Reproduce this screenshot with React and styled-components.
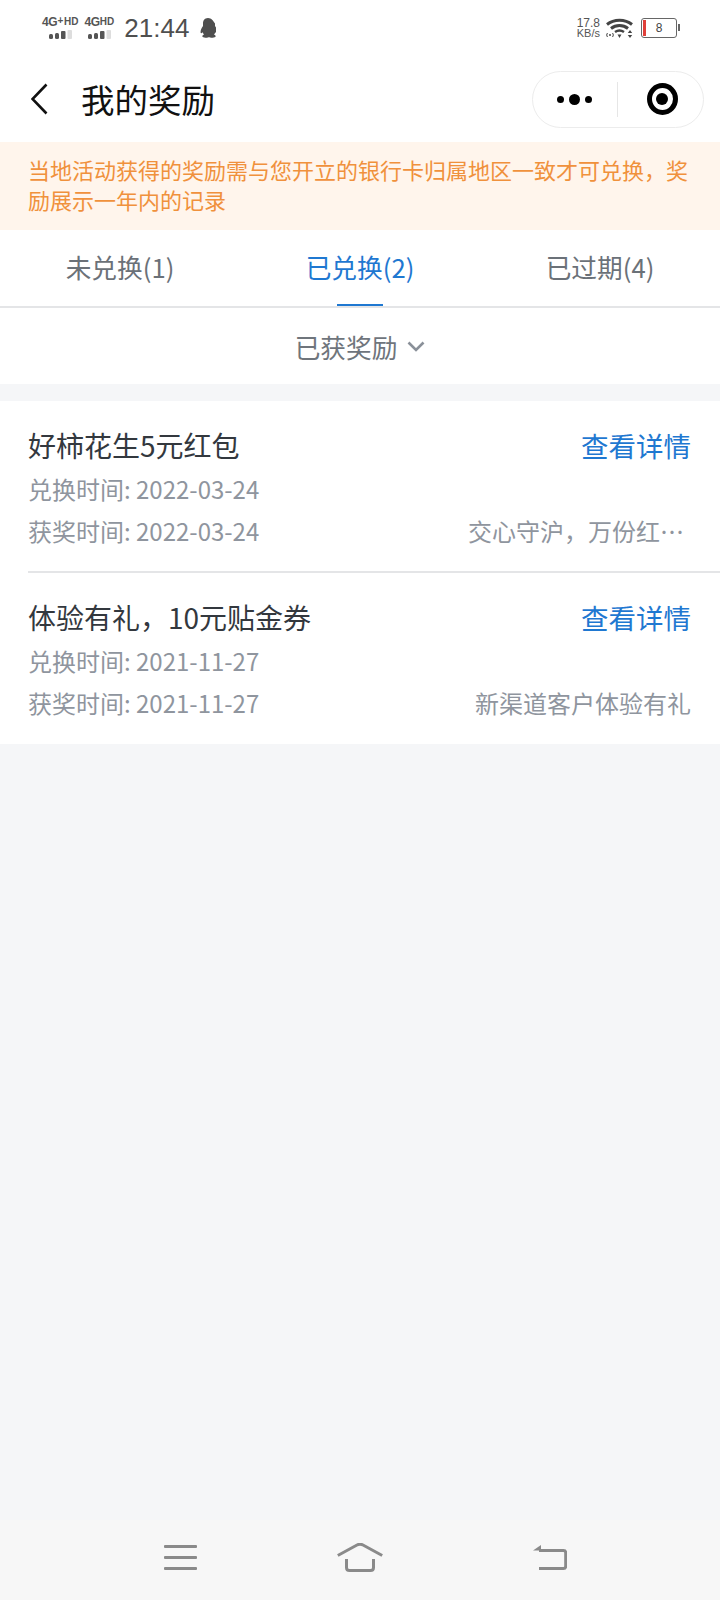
import React from "react";
import styled, { createGlobalStyle } from "styled-components";

const GlobalStyle = createGlobalStyle`
    html, body {
        margin: 0;
        padding: 0;
        background: #f5f6f8;
    }
    * {
        box-sizing: border-box;
    }
`;

const cjk = `"Noto Sans CJK SC", "Noto Sans", sans-serif`;
const latin = `"Liberation Sans", Arial, sans-serif`;

const rewards = [
    {
        title: "好柿花生5元红包",
        swap: "兑换时间: 2022-03-24",
        won: "获奖时间: 2022-03-24",
        source: "交心守沪，万份红…",
        clipped: true,
    },
    {
        title: "体验有礼，10元贴金券",
        swap: "兑换时间: 2021-11-27",
        won: "获奖时间: 2021-11-27",
        source: "新渠道客户体验有礼",
    },
];

function Signal() {
    return (
        <svg width="23" height="9" viewBox="0 0 23 9">
            <rect x="0" y="4" width="4" height="5" rx="1.500" fill="#555" />
            <rect x="6" y="3" width="4" height="6" rx="1.500" fill="#555" />
            <rect x="12" y="1" width="4.500" height="8" rx="1" fill="#555" />
            <rect x="18.500" y="0" width="4.500" height="9" rx="1" fill="#ddd" />
        </svg>
    );
}

function Penguin() {
    return (
        <svg width="16" height="20" viewBox="0 0 16 20">
            <path
                d="M8 0C4.400 0 3 2.800 3 5.600V8C1.400 10 .4 12.400.6 14.400c.1 1 .9 1 2-.2.3 1 .8 1.800 1.500 2.400-1.300.5-1.900 1.200-1.700 2 .3 1 2.600 1.400 5.600.8.6-.1 1.400-.1 2 0 3 .6 5.300.2 5.600-.8.2-.8-.4-1.500-1.700-2 .7-.6 1.200-1.400 1.500-2.400 1.100 1.200 1.900 1.200 2 .2.2-2-.8-4.400-2.400-6.400V5.600C13 2.800 11.600 0 8 0Z"
                fill="#4f4f4f"
            />
        </svg>
    );
}

function Wifi() {
    return (
        <svg width="27" height="20" viewBox="0 0 27 20" fill="none" stroke="#444">
            <path d="M1 6.500C8 .8 19 .8 26 6.500" strokeWidth="3" />
            <path d="M5 10.500c5-4 12-4 17 0" strokeWidth="3" />
            <path d="M9 14c3-2 6-2 9 0" strokeWidth="2.600" />
            <path d="M11.500 16.500h4L13.500 20Z" fill="#444" stroke="none" />
            <path d="M1.500 15c-1 1.300-1 2.700 0 4M6.500 15c1 1.300 1 2.700 0 4" strokeWidth="1" />
            <circle cx="4" cy="17" r="1" fill="#444" stroke="none" />
            <path d="M24 12l-2.200 3h4.400ZM24 20l-2.200-3h4.400Z" fill="#444" stroke="none" />
        </svg>
    );
}

function Battery() {
    return (
        <BatteryBody>
            <BatteryLevel />
            <BatteryText>8</BatteryText>
        </BatteryBody>
    );
}

function BackIcon() {
    return (
        <svg width="17" height="32" viewBox="0 0 17 32" fill="none">
            <path d="M15.500 1.500L1.500 16l14 14.500" stroke="#111" strokeWidth="2.600" />
        </svg>
    );
}

function Chevron() {
    return (
        <svg width="18" height="11" viewBox="0 0 18 11" fill="none">
            <path d="M1.500 1.500L9 9l7.500-7.500" stroke="#8a9099" strokeWidth="2.600" />
        </svg>
    );
}

function MenuIcon() {
    return (
        <svg width="33" height="25" viewBox="0 0 33 25" fill="#8a8a8a">
            <rect x="0" y="0" width="33" height="3" rx="1" />
            <rect x="0" y="11" width="33" height="3" rx="1" />
            <rect x="0" y="22" width="33" height="3" rx="1" />
        </svg>
    );
}

function HomeIcon() {
    return (
        <svg width="46" height="29" viewBox="0 0 46 29" fill="none" stroke="#8a8a8a" strokeWidth="3">
            <path d="M.8 12.500L20 2c2-1 4-1 6 0l19.200 10.500" />
            <path d="M9.500 16v8.500c0 2 1 3 3 3h21c2 0 3-1 3-3V16" />
        </svg>
    );
}

function ReturnIcon() {
    return (
        <svg width="34" height="25" viewBox="0 0 34 25" fill="none">
            <path d="M0 5.500L8 0v5.500Z" fill="#8a8a8a" />
            <path d="M6 5.500h24.500c1.500 0 2.200.7 2.200 2.200v13.600c0 1.500-.7 2.200-2.200 2.200H6" stroke="#8a8a8a" strokeWidth="3" />
        </svg>
    );
}

export default function App() {
    return (
        <Page>
            <GlobalStyle />
            <StatusBar>
                <StatusGroup>
                    <NetworkBlock>
                        <NetworkLabel>
                            4G<NetworkSup>+</NetworkSup>
                            <NetworkSmall>HD</NetworkSmall>
                        </NetworkLabel>
                        <Signal />
                    </NetworkBlock>
                    <NetworkBlock>
                        <NetworkLabel>
                            4G<NetworkSmall>HD</NetworkSmall>
                        </NetworkLabel>
                        <Signal />
                    </NetworkBlock>
                    <Clock>21:44</Clock>
                    <Penguin />
                </StatusGroup>
                <StatusGroup>
                    <Speed>
                        <span>17.8</span>
                        <span>KB/s</span>
                    </Speed>
                    <Wifi />
                    <Battery />
                </StatusGroup>
            </StatusBar>

            <NavBar>
                <BackButton>
                    <BackIcon />
                </BackButton>
                <NavTitle>我的奖励</NavTitle>
                <Capsule>
                    <MoreDots>
                        <Dot $size={7} />
                        <Dot $size={11} />
                        <Dot $size={7} />
                    </MoreDots>
                    <CapsuleLine />
                    <Target />
                </Capsule>
            </NavBar>

            <Notice>当地活动获得的奖励需与您开立的银行卡归属地区一致才可兑换，奖励展示一年内的记录</Notice>

            <Tabs>
                <Tab>未兑换(1)</Tab>
                <Tab $active>已兑换(2)</Tab>
                <Tab>已过期(4)</Tab>
            </Tabs>

            <FilterBar>
                已获奖励
                <Chevron />
            </FilterBar>

            <RewardList>
                {rewards.map((item, i) => (
                    <RewardRow key={item.title} $last={i === rewards.length - 1}>
                        <TitleLine>
                            <RewardTitle>{item.title}</RewardTitle>
                            <DetailLink>查看详情</DetailLink>
                        </TitleLine>
                        <RewardLine>
                            <MetaText>{item.swap}</MetaText>
                        </RewardLine>
                        <RewardLine>
                            <MetaText>{item.won}</MetaText>
                            <SourceText $clipped={item.clipped}>{item.source}</SourceText>
                        </RewardLine>
                    </RewardRow>
                ))}
            </RewardList>

            <BottomNav>
                <MenuIcon />
                <HomeIcon />
                <ReturnIcon />
            </BottomNav>
        </Page>
    );
}

const Page = styled.div`
    width: 720px;
    height: 1600px;
    display: flex;
    flex-direction: column;
    background: #f5f6f8;
    font-family: ${cjk};
    overflow: hidden;
`;

const StatusBar = styled.div`
    height: 56px;
    padding: 0 43px 0 42px;
    display: flex;
    align-items: center;
    justify-content: space-between;
    background: #fff;
`;

const StatusGroup = styled.div`
    display: flex;
    align-items: center;
    gap: 6px;
`;

const NetworkBlock = styled.div`
    display: flex;
    flex-direction: column;
    align-items: center;
    gap: 2px;
`;

const NetworkLabel = styled.span`
    display: flex;
    align-items: flex-start;
    font: bold 12px/11px ${latin};
    color: #555;
    letter-spacing: -0.3px;
`;

const NetworkSup = styled.span`
    font-size: 10px;
    line-height: 8px;
    margin-right: 1px;
`;

const NetworkSmall = styled.span`
    font-size: 10px;
    line-height: 9px;
    letter-spacing: 0;
`;

const Clock = styled.span`
    font: 26px/30px ${latin};
    color: #4f4f4f;
    margin: 0 5px 0 4px;
`;

const Speed = styled.div`
    display: flex;
    flex-direction: column;
    align-items: center;
    font: 11px/10px ${latin};
    color: #555;
    & > span:first-child {
        font-size: 12px;
    }
`;

const BatteryBody = styled.div`
    position: relative;
    width: 36px;
    height: 20px;
    margin-left: 2px;
    border: 1.500px solid #666;
    border-radius: 3px;
    display: flex;
    align-items: center;
    justify-content: center;
    &::after {
        content: "";
        position: absolute;
        right: -4px;
        top: 5px;
        width: 2px;
        height: 7px;
        background: #666;
    }
`;

const BatteryLevel = styled.div`
    position: absolute;
    left: 1px;
    top: 1px;
    bottom: 1px;
    width: 3px;
    background: #e0403a;
`;

const BatteryText = styled.span`
    font: 12px/14px ${latin};
    color: #444;
`;

const NavBar = styled.div`
    height: 86px;
    padding: 0 16px 0 31px;
    display: flex;
    align-items: center;
    background: #fff;
`;

const BackButton = styled.div`
    width: 50px;
    display: flex;
`;

const NavTitle = styled.div`
    flex: 1;
    font-size: 33.500px;
    line-height: 44px;
    color: #111;
`;

const Capsule = styled.div`
    width: 172px;
    height: 57px;
    border: 1px solid #ececec;
    border-radius: 29px;
    display: flex;
    align-items: center;
    padding: 0 25px 0 24px;
    background: #fff;
`;

const MoreDots = styled.div`
    display: flex;
    align-items: center;
    gap: 5px;
    width: 62px;
`;

const Dot = styled.span`
    width: ${(p) => p.$size}px;
    height: ${(p) => p.$size}px;
    border-radius: 50%;
    background: #000;
`;

const CapsuleLine = styled.div`
    width: 1px;
    height: 35px;
    background: #e6e6e6;
    margin-right: 29px;
`;

const Target = styled.div`
    width: 32px;
    height: 32px;
    border: 5px solid #000;
    border-radius: 50%;
    display: flex;
    align-items: center;
    justify-content: center;
    &::before {
        content: "";
        width: 12px;
        height: 12px;
        border-radius: 50%;
        background: #000;
    }
`;

const Notice = styled.div`
    height: 88px;
    padding: 12px 28px 0 28px;
    background: #fff5ec;
    color: #f0913c;
    font-size: 22px;
    line-height: 30px;
`;

const Tabs = styled.div`
    height: 78px;
    display: flex;
    background: #fff;
    border-bottom: 2px solid #e4e5e7;
`;

const Tab = styled.div`
    position: relative;
    flex: 1;
    display: flex;
    align-items: center;
    justify-content: center;
    font-size: 25.700px;
    padding-bottom: 3px;
    color: ${(p) => (p.$active ? "#1f78d1" : "#6b7178")};
    ${(p) =>
        p.$active &&
        `
        &::after {
            content: "";
            position: absolute;
            left: 50%;
            bottom: 0;
            width: 46px;
            height: 2px;
            margin-left: -23px;
            background: #1f78d1;
        }
    `}
`;

const FilterBar = styled.div`
    height: 76px;
    display: flex;
    align-items: center;
    justify-content: center;
    gap: 10px;
    background: #fff;
    color: #6f757c;
    font-size: 25.700px;
`;

const RewardList = styled.div`
    margin-top: 17px;
    padding-left: 28px;
    background: #fff;
`;

const RewardRow = styled.div`
    height: ${(p) => (p.$last ? "171px" : "172px")};
    padding: 26px 29px 0 0;
    display: flex;
    flex-direction: column;
    gap: 6px;
    border-bottom: ${(p) => (p.$last ? "none" : "2px solid #e4e5e7")};
`;

const RewardLine = styled.div`
    height: 36px;
    display: flex;
    align-items: center;
    justify-content: space-between;
`;

const TitleLine = styled(RewardLine)`
    margin-bottom: 1px;
`;

const RewardTitle = styled.span`
    font-size: 28px;
    color: #33383e;
`;

const DetailLink = styled.span`
    font-size: 27.500px;
    color: #1f78d1;
`;

const MetaText = styled.span`
    font-size: 24px;
    color: #8f959e;
`;

const SourceText = styled(MetaText)`
    margin-right: ${(p) => (p.$clipped ? "7px" : "0")};
`;

const BottomNav = styled.div`
    margin-top: auto;
    height: 80px;
    padding: 0 0 6px 164px;
    display: grid;
    grid-template-columns: 173px 196px auto;
    align-items: center;
    background: #f7f7f7;
`;
